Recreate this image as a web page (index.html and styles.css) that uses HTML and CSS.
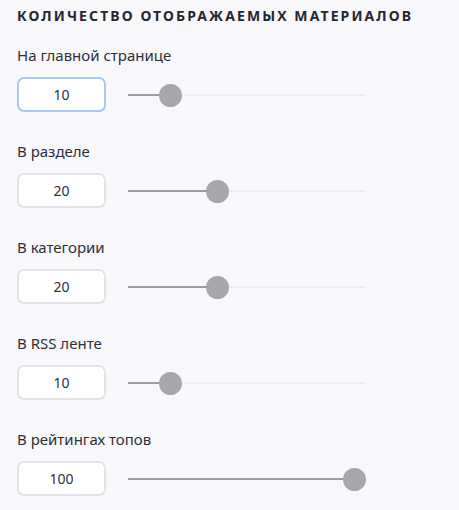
FILE: index.html
```html
<!DOCTYPE html>
<html lang="ru">
<head>
<meta charset="utf-8">
<link rel="stylesheet" href="styles.css">
</head>
<body>
<div class="panel">
  <h2 class="title">Количество отображаемых материалов</h2>
  <div class="field">
    <div class="label">На главной странице</div>
    <div class="control">
      <div class="num focused">10</div>
      <div class="slider"><div class="fill" style="width:42px"></div><div class="thumb" style="left:42px"></div></div>
    </div>
  </div>
  <div class="field">
    <div class="label">В разделе</div>
    <div class="control">
      <div class="num">20</div>
      <div class="slider"><div class="fill" style="width:89px"></div><div class="thumb" style="left:89px"></div></div>
    </div>
  </div>
  <div class="field">
    <div class="label">В категории</div>
    <div class="control">
      <div class="num">20</div>
      <div class="slider"><div class="fill" style="width:89px"></div><div class="thumb" style="left:89px"></div></div>
    </div>
  </div>
  <div class="field">
    <div class="label">В RSS ленте</div>
    <div class="control">
      <div class="num">10</div>
      <div class="slider"><div class="fill" style="width:42px"></div><div class="thumb" style="left:42px"></div></div>
    </div>
  </div>
  <div class="field">
    <div class="label">В рейтингах топов</div>
    <div class="control">
      <div class="num">100</div>
      <div class="slider"><div class="fill" style="width:226px"></div><div class="thumb" style="left:226px"></div></div>
    </div>
  </div>
</div>
</body>
</html>
```
FILE: styles.css
```css
html, body {
  margin: 0;
  padding: 0;
  background: #f8f8fb;
}
.panel {
  padding: 8px 17px 0 17px;
  font-family: "Noto Sans", sans-serif;
  color: #2b2b33;
}
.title {
  margin: 0 0 21px 0;
  font-size: 14px;
  line-height: 16px;
  font-weight: 700;
  text-transform: uppercase;
  letter-spacing: 2.1px;
  color: #26262e;
}
.field {
  display: flex;
  flex-direction: column;
  gap: 12px;
  margin-bottom: 29px;
}
.label {
  font-size: 15px;
  line-height: 20px;
  color: #2f2f38;
}
.control {
  display: flex;
  align-items: center;
  gap: 22px;
}
.num {
  box-sizing: border-box;
  width: 89px;
  height: 35px;
  border: 2px solid #e3e3e7;
  border-radius: 7px;
  background: #fff;
  display: flex;
  align-items: center;
  justify-content: center;
  font-size: 14px;
  color: #2f2f40;
}
.num.focused {
  border-color: #a9c8f2;
}
.slider {
  position: relative;
  width: 238px;
  height: 2px;
  background: #eceef1;
  margin-top: 1px;
}
.fill {
  height: 2px;
  background: #9e9ea1;
}
.thumb {
  position: absolute;
  top: 50%;
  width: 23px;
  height: 23px;
  margin: -11.5px 0 0 -11.5px;
  border-radius: 50%;
  background: #a6a7aa;
}
```
